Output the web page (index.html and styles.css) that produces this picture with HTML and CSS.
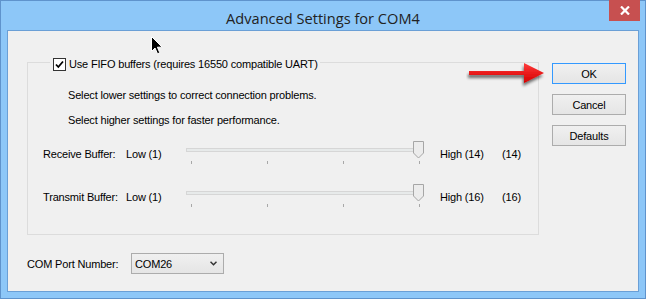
FILE: index.html
```html
<!DOCTYPE html>
<html>
<head>
<meta charset="utf-8">
<link rel="stylesheet" href="styles.css">
</head>
<body>
<div class="window">
  <div class="titlebar">
    <span class="spacer"></span>
    <div class="title">Advanced Settings for COM4</div>
    <div class="close">
      <svg width="10" height="9" viewBox="0 0 10 9"><path d="M1 0.5 L9 8.5 M9 0.5 L1 8.5" stroke="#fff" stroke-width="2.2" fill="none"/></svg>
    </div>
  </div>
  <div class="client">
    <div class="main">
      <fieldset class="group">
        <legend class="legend">
          <span class="check"><svg width="13" height="13" viewBox="0 0 13 13"><rect x="0.5" y="0.5" width="12" height="12" fill="#fff" stroke="#333"/><path d="M3 6.5 L5.3 9 L10 3.5" stroke="#000" stroke-width="1.8" fill="none"/></svg></span>
          <span class="legend-text">Use FIFO buffers (requires 16550 compatible UART)</span>
        </legend>
        <p class="note first">Select lower settings to correct connection problems.</p>
        <p class="note second">Select higher settings for faster performance.</p>
        <div class="slider-row">
          <span class="lbl">Receive Buffer:</span>
          <span class="lbl">Low (1)</span>
          <svg class="slider" width="240" height="24" viewBox="0 0 240 24">
            <rect x="0.5" y="7.5" width="237" height="3" fill="#e7eaea" stroke="#d6d6d6"/>
            <path d="M5.5 20 V23 M81.5 20 V23 M157.5 20 V23 M233.5 20 V23" stroke="#a8a8a8"/>
            <path d="M227.5 0.5 H237.5 V12 L232.5 17 L227.5 12 Z" fill="#ececec" stroke="#a6a6a6"/>
          </svg>
          <span class="lbl">High (14)</span>
          <span class="lbl">(14)</span>
        </div>
        <div class="slider-row second-row">
          <span class="lbl">Transmit Buffer:</span>
          <span class="lbl">Low (1)</span>
          <svg class="slider" width="240" height="24" viewBox="0 0 240 24">
            <rect x="0.5" y="7.5" width="237" height="3" fill="#e7eaea" stroke="#d6d6d6"/>
            <path d="M5.5 20 V23 M81.5 20 V23 M157.5 20 V23 M233.5 20 V23" stroke="#a8a8a8"/>
            <path d="M227.5 0.5 H237.5 V12 L232.5 17 L227.5 12 Z" fill="#ececec" stroke="#a6a6a6"/>
          </svg>
          <span class="lbl">High (16)</span>
          <span class="lbl">(16)</span>
        </div>
      </fieldset>
      <div class="port-row">
        <span class="port-label">COM Port Number:</span>
        <div class="combo">
          <span>COM26</span>
          <svg width="7" height="5" viewBox="0 0 7 5"><path d="M0.5 0.8 L3.5 3.8 L6.5 0.8" stroke="#333" stroke-width="1.5" fill="none"/></svg>
        </div>
      </div>
    </div>
    <div class="buttons">
      <div class="btn default">OK</div>
      <div class="btn">Cancel</div>
      <div class="btn">Defaults</div>
    </div>
  </div>
  <svg class="arrow" width="84" height="30" viewBox="0 0 84 30">
    <defs>
      <linearGradient id="rg" x1="0" y1="0" x2="0" y2="1">
        <stop offset="0" stop-color="#ff3b3b"/>
        <stop offset="1" stop-color="#d40000"/>
      </linearGradient>
      <filter id="sh" x="-20%" y="-40%" width="140%" height="200%">
        <feGaussianBlur in="SourceAlpha" stdDeviation="1.6"/>
        <feOffset dx="-1" dy="3" result="b"/>
        <feComponentTransfer><feFuncA type="linear" slope="0.55"/></feComponentTransfer>
        <feMerge><feMergeNode/><feMergeNode in="SourceGraphic"/></feMerge>
      </filter>
    </defs>
    <path filter="url(#sh)" fill="url(#rg)" d="M3 10 H58 V2 L78 12 L58 22 V14 H3 Z"/>
  </svg>
  <svg class="cursor" width="14" height="20" viewBox="0 0 14 20">
    <path d="M0.5 0.5 L0.5 15.5 L4 12 L6.5 17.8 L8.8 16.8 L6.4 11.2 L11.2 11.2 Z" fill="#000" stroke="#fff" stroke-width="1"/>
  </svg>
</div>
</body>
</html>
```
FILE: styles.css
```css
* { box-sizing: border-box; }
html, body { margin: 0; padding: 0; }
body {
  width: 646px;
  height: 299px;
  overflow: hidden;
  background: #8cc6f7;
}
.window {
  position: relative;
  width: 646px;
  height: 299px;
  border: 1px solid #5f93cc;
  background: #8dc7f8;
  padding: 0 6px 6px 6px;
  display: flex;
  flex-direction: column;
  font-family: "Liberation Sans", Arial, sans-serif;
  font-size: 11px;
  letter-spacing: -0.17px;
  color: #000;
}
.titlebar {
  height: 29px;
  margin: 0 -6px;
  display: grid;
  grid-template-columns: 1fr auto 1fr;
  align-items: start;
}
.title {
  font-family: "Open Sans", "Noto Sans", sans-serif;
  font-size: 14.6px;
  letter-spacing: 0;
  color: #222;
  line-height: 20px;
  padding-top: 7px;
  white-space: nowrap;
}
.close {
  justify-self: end;
  margin-top: -1px;
  margin-right: 5px;
  width: 31px;
  height: 21px;
  background: #c75050;
  display: flex;
  align-items: center;
  justify-content: center;
}
.close svg { display: block; }
.client {
  flex: 1;
  border: 1px solid #6a9fd6;
  background: #f0f0f0;
  display: flex;
  align-items: flex-start;
}
.main {
  width: 531px;
  padding-left: 19px;
  padding-top: 23px;
}
.group {
  width: 512px;
  margin: 0;
  padding: 0 0 26px 0;
  border: 1px solid #dcdcdc;
}
.legend {
  margin-left: 22px;
  padding: 4px 2px 0 3px;
  display: flex;
  align-items: center;
  height: 17px;
}
.check { width: 13px; height: 13px; display: block; }
.check svg { display: block; }
.legend-text {
  margin-left: 3px;
  line-height: 13px;
  white-space: nowrap;
}
.note {
  margin: 0;
  padding-left: 40px;
  line-height: 14px;
}
.note.first { margin-top: 17px; }
.note.second { margin-top: 11px; }
.slider-row {
  margin-top: 14px;
  padding-left: 15px;
  height: 24px;
  display: grid;
  grid-template-columns: 83px 60px 254px 62px auto;
  align-items: start;
}
.slider-row.second-row { margin-top: 19px; }
.lbl {
  line-height: 14px;
  padding-top: 6px;
  white-space: nowrap;
}
.slider { display: block; }
.port-row {
  margin-top: 18px;
  display: flex;
  align-items: center;
}
.port-label { width: 104px; }
.combo {
  width: 93px;
  height: 21px;
  border: 1px solid #acacac;
  background: linear-gradient(#f0f0f0, #e5e5e5);
  display: flex;
  align-items: center;
  justify-content: space-between;
  padding: 0 6px 0 3px;
}
.combo svg { display: block; }
.buttons {
  margin-left: 13px;
  padding-top: 32px;
  display: flex;
  flex-direction: column;
  gap: 10px;
}
.btn {
  width: 74px;
  height: 21px;
  border: 1px solid #acacac;
  background: linear-gradient(#f0f0f0, #e5e5e5);
  display: flex;
  align-items: center;
  justify-content: center;
}
.btn.default { border-color: #3399ff; }
.arrow {
  position: absolute;
  left: 465px;
  top: 60px;
}
.cursor {
  position: absolute;
  left: 150px;
  top: 35px;
}
```
